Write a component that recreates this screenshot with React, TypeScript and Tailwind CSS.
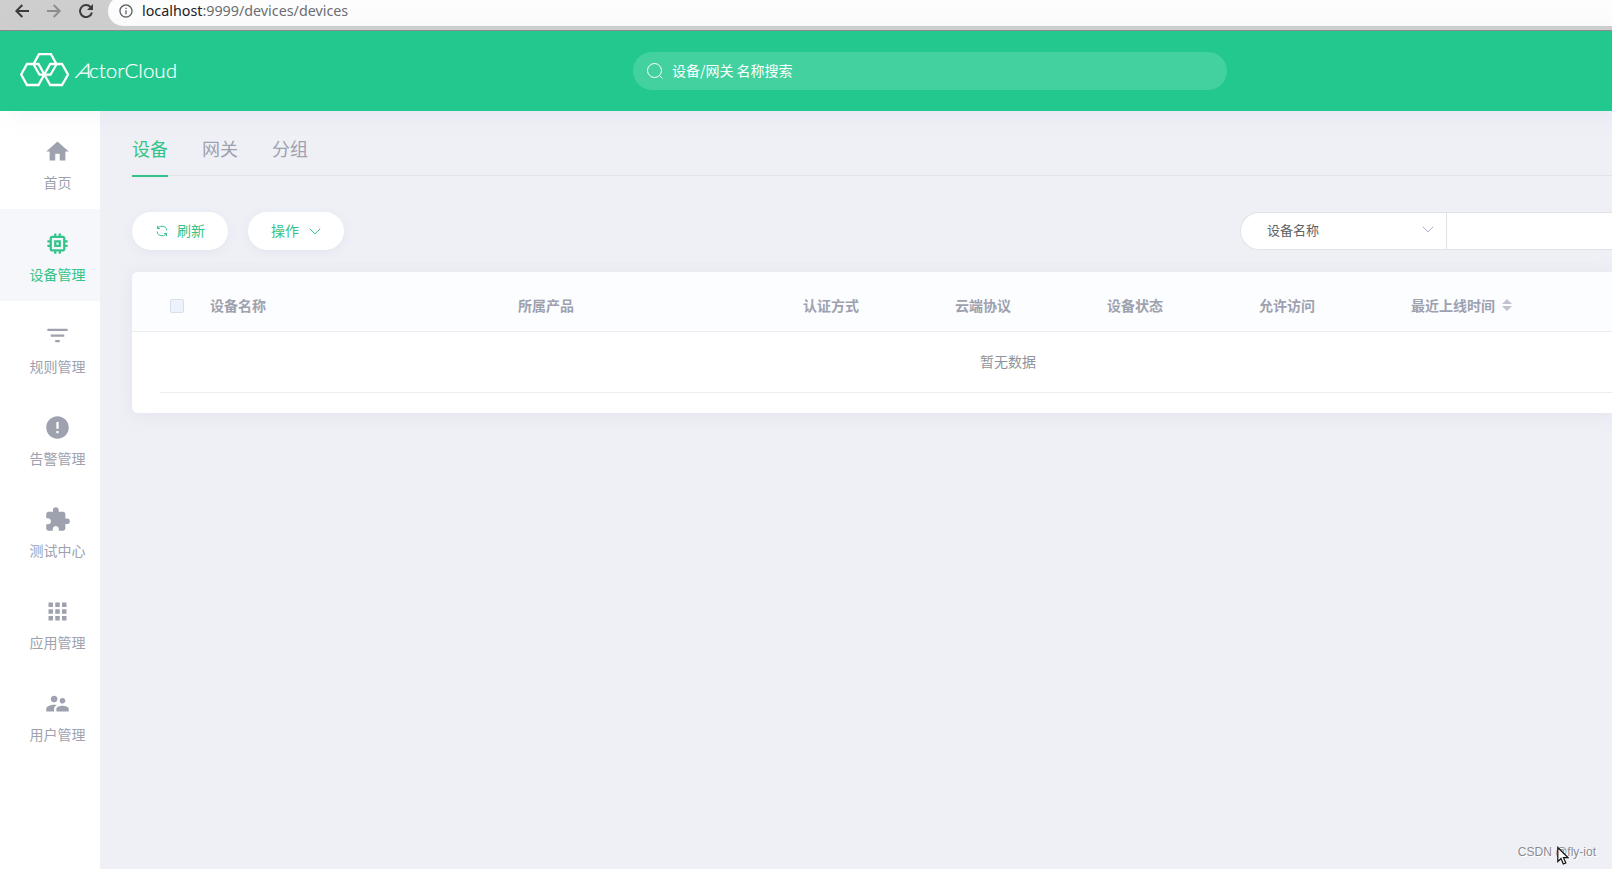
import { clsx } from "clsx";
import type { IconType } from "react-icons";
import {
  MdApps,
  MdError,
  MdExtension,
  MdFilterList,
  MdHome,
  MdInfoOutline,
  MdMemory,
  MdSupervisorAccount,
} from "react-icons/md";

const menu: { label: string; icon: IconType; active?: boolean }[] = [
  { label: "首页", icon: MdHome },
  { label: "设备管理", icon: MdMemory, active: true },
  { label: "规则管理", icon: MdFilterList },
  { label: "告警管理", icon: MdError },
  { label: "测试中心", icon: MdExtension },
  { label: "应用管理", icon: MdApps },
  { label: "用户管理", icon: MdSupervisorAccount },
];

const tabs = ["设备", "网关", "分组"];

const columns = [
  { label: "设备名称", width: "w-[308px]" },
  { label: "所属产品", width: "w-[285px]" },
  { label: "认证方式", width: "w-[152px]" },
  { label: "云端协议", width: "w-[152px]" },
  { label: "设备状态", width: "w-[152px]" },
  { label: "允许访问", width: "w-[152px]" },
];

function Chevron({ className }: { className?: string }) {
  return (
    <svg viewBox="0 0 12 7" fill="none" className={clsx("h-[7px] w-3", className)}>
      <path d="M.8.8 6 5.800 11.200.8" stroke="currentColor" />
    </svg>
  );
}

function BrowserBar() {
  return (
    <div className="flex h-[31px] items-start border-b border-[#8c8484] bg-[#cecece]">
      <div className="flex h-[22px] w-[108px] shrink-0 items-center gap-[18px] pl-[15px] text-[#3c3c3e]">
        <svg viewBox="0 0 14 14" className="size-[14px]" fill="none" stroke="currentColor" strokeWidth="2">
          <path d="M14 7H1.500M7.300 1 1.300 7 7.300 13" />
        </svg>
        <svg
          viewBox="0 0 14 14"
          className="size-[14px] text-[#8e8e8e]"
          fill="none"
          stroke="currentColor"
          strokeWidth="2"
        >
          <path d="M0 7H12.500M6.700 1 12.700 7 6.700 13" />
        </svg>
        <svg viewBox="0 0 14 14" className="size-[14px]" fill="none" stroke="currentColor" strokeWidth="2">
          <path d="M12.900 8.500A6 6 0 1 1 11.500 3L12.500 4" />
          <path d="M14 0V6H8Z" fill="currentColor" stroke="none" />
        </svg>
      </div>
      <div className="-mt-[4px] flex h-[30px] flex-1 items-center rounded-l-full bg-[#fdfdfd] pl-[10px]">
        <MdInfoOutline className="size-4 text-[#5f6368]" />
        <span className="-mt-px ml-2 font-['Noto_Sans',sans-serif] text-[14.3px] text-[#6b6e72]">
          <span className="text-[#202124]">localhost</span>:9999/devices/devices
        </span>
      </div>
    </div>
  );
}

function Logo() {
  return (
    <svg viewBox="0 0 160 36" className="h-9 w-40" fill="none" stroke="#fff">
      <g strokeWidth="2.300">
        <path d="M1.200 21.500 7 11H18.500L24.300 21.500 18.500 32H7Z" />
        <path d="M24.300 21.500 30.200 11H42L48 21.500 42 32H30.200Z" />
        <path d="M13.500 11.300 19 1.200H31L36.500 11.300 30.500 21.700H19.500Z" />
      </g>
      <g
        fill="#fff"
        strokeWidth="0.200"
        className="font-['Lato',sans-serif] text-[20px] font-light"
      >
        <text
          transform="translate(54.500 25) skewX(-24)"
          textLength="15"
          lengthAdjust="spacingAndGlyphs"
        >
          A
        </text>
        <text x="69" y="25" textLength="88" lengthAdjust="spacingAndGlyphs">
          ctorCloud
        </text>
      </g>
    </svg>
  );
}

function Header() {
  return (
    <header className="relative z-10 flex h-20 items-center bg-[#23c88e] shadow-[12px_2px_20px_rgba(200,205,225,0.25)]">
      <div className="w-[633px] pl-5">
        <Logo />
      </div>
      <div className="flex h-[38px] w-[594px] items-center rounded-full bg-[#43d29f] pl-[14px] text-white">
        <svg viewBox="0 0 16 16" className="size-4" fill="none" stroke="currentColor">
          <circle cx="7.500" cy="7.500" r="7" />
          <path d="m12.500 12.500 3 3" />
        </svg>
        <span className="-mt-[2px] ml-[9px] text-sm">设备/网关 名称搜索</span>
      </div>
    </header>
  );
}

function Sidebar() {
  return (
    <nav className="w-[100px] shrink-0 bg-white pt-[6px]">
      {menu.map(({ label, icon: Icon, active }) => (
        <div
          key={label}
          className={clsx(
            "flex h-[92px] flex-col items-center pt-[21px] pl-[15px]",
            active ? "bg-[#f5f7fb] text-[#34c388]" : "text-[#9ea1ae]",
          )}
        >
          <Icon className="size-[27px] shrink-0" />
          <span className="mt-[7px] text-sm leading-5">{label}</span>
        </div>
      ))}
    </nav>
  );
}

function Toolbar() {
  return (
    <div className="mt-[36px] flex h-[38px] items-center">
      <button className="flex h-[38px] w-24 items-center rounded-full bg-white pl-6 text-sm text-[#34c388] shadow-[0_2px_8px_rgba(200,205,230,0.3)]">
        <svg viewBox="0 0 12 12" className="size-3" fill="none" stroke="currentColor">
          <path d="M1.500.8V3.500H4M1.500 3.300C2.500 1.800 4 1.200 6 1.200 8.800 1.200 10.800 3 10.800 5.500" />
          <path d="M10.500 11.200V8.500H8M10.500 8.700C9.500 10.200 8 10.800 6 10.800 3.200 10.800 1.200 9 1.200 6.500" />
        </svg>
        <span className="-mt-[3px] ml-[9px]">刷新</span>
      </button>
      <button className="ml-5 flex h-[38px] w-24 items-center rounded-full bg-white pl-[23px] text-sm text-[#34c388] shadow-[0_2px_8px_rgba(200,205,230,0.3)]">
        <span className="-mt-[3px]">操作</span>
        <Chevron className="ml-[10px]" />
      </button>
      <div className="ml-auto flex h-[38px] w-[372px] rounded-l-full border border-r-0 border-[#e1e2e8] bg-white">
        <div className="flex w-[206px] items-center justify-between border-r border-[#e1e2e8] pr-3 pl-[26px] text-[13px] text-[#606266]">
          <span className="-mt-[3px]">设备名称</span>
          <Chevron className="-mt-[3px] text-[#b5a8d0]" />
        </div>
      </div>
    </div>
  );
}

function DeviceTable() {
  return (
    <section className="mt-[22px] h-[141px] rounded-l-md bg-white shadow-[0_2px_16px_rgba(205,208,225,0.4)]">
      <div className="flex h-[60px] items-center rounded-tl-md border-b border-[#ebedf3] bg-[#fcfdff] pt-[9px] pl-[38px] text-sm font-bold text-[#9ea1ae]">
        <span className="mr-[26px] size-[14px] shrink-0 rounded-xs border border-[#d8deec] bg-[#edf2fc]" />
        {columns.map((col) => (
          <span key={col.label} className={clsx("-mt-[3px] shrink-0", col.width)}>
            {col.label}
          </span>
        ))}
        <span className="-mt-[3px] flex shrink-0 items-center">
          最近上线时间
          <svg viewBox="0 0 10 12" className="ml-[7px] h-3 w-[10px]" fill="#c0c4cc">
            <path d="M0 5 5 0 10 5ZM0 7 5 12 10 7Z" />
          </svg>
        </span>
      </div>
      <div className="ml-7 flex h-[61px] items-center border-b border-[#ebedf3] pb-[3px] pl-[820px] text-sm text-[#909399]">
        暂无数据
      </div>
    </section>
  );
}

export default function App() {
  return (
    <div className="relative flex h-[869px] w-[1612px] flex-col overflow-hidden bg-[#eff0f6] font-['Noto_Sans_CJK_SC',sans-serif]">
      <BrowserBar />
      <Header />
      <div className="flex flex-1">
        <Sidebar />
        <main className="min-w-0 flex-1 pl-8">
          <div className="flex h-[65px] gap-[34px] border-b border-[#e2e3e9] pt-[24px] text-lg leading-[27px] text-[#9ea1ae]">
            {tabs.map((tab, i) => (
              <span
                key={tab}
                className={clsx("h-[42px]", i === 0 && "border-b-2 border-[#34c388] text-[#34c388]")}
              >
                {tab}
              </span>
            ))}
          </div>
          <Toolbar />
          <DeviceTable />
        </main>
      </div>
      <span className="absolute right-[16px] bottom-[9px] font-['Liberation_Sans',sans-serif] text-xs text-[#8b8c91] [text-shadow:1px_1px_0_#fff]">
        CSDN @fly-iot
      </span>
      {/* mouse pointer */}
      <svg
        viewBox="0 0 12 19"
        className="absolute top-[846px] left-[1557px] h-[19px] w-3"
        fill="#fff"
        fillOpacity="0.85"
        stroke="#111"
        strokeWidth="1.200"
      >
        <path d="M.8 1.500V15.500L4 12.500 6.300 18 8.800 17 6.500 11.700H11Z" />
      </svg>
    </div>
  );
}
